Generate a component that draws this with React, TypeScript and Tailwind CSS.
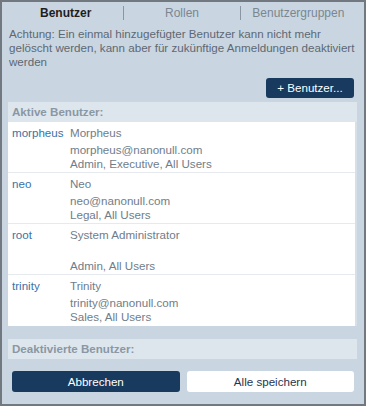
import React from "react";

const users = [
  { id: "morpheus", name: "Morpheus", email: "morpheus@nanonull.com", groups: "Admin, Executive, All Users" },
  { id: "neo", name: "Neo", email: "neo@nanonull.com", groups: "Legal, All Users" },
  { id: "root", name: "System Administrator", email: "", groups: "Admin, All Users" },
  { id: "trinity", name: "Trinity", email: "trinity@nanonull.com", groups: "Sales, All Users" },
];

export default function App() {
  return (
    <div className="w-[366px] h-[406px] box-border border-2 border-[#72787f] bg-[#c9d6e1] flex flex-col font-['Liberation_Sans',Arial,sans-serif] text-[11.6px] leading-[14px]">
      {/* Tabs */}
      <div className="flex items-center h-[22px] ml-[6px] mr-[8px] text-[12px]">
        <div className="flex-1 text-center font-bold text-[#1e1e1e]">Benutzer</div>
        <div className="w-px h-[14px] bg-[#8a96a2]" />
        <div className="flex-1 text-center text-[#7b8691]">Rollen</div>
        <div className="w-px h-[14px] bg-[#8a96a2]" />
        <div className="flex-1 text-center text-[#7b8691]">Benutzergruppen</div>
      </div>

      {/* Warning */}
      <div className="mt-[3px] pl-[7px] pr-[4px] text-[#5d6873]">
        Achtung: Ein einmal hinzugefügter Benutzer kann nicht mehr gelöscht werden, kann aber für zukünftige Anmeldungen deaktiviert werden
      </div>

      {/* Add button */}
      <div className="flex justify-end mt-[9px] pr-[10px]">
        <button className="w-[88px] h-[20px] rounded-[3px] bg-[#173a5e] text-white text-[11.6px] leading-[14px]">
          + Benutzer...
        </button>
      </div>

      {/* Active users panel */}
      <div className="mt-[4px] ml-[6px] mr-[7px] flex flex-col">
        <div className="h-[20px] flex items-center pl-[4px] bg-[#dee6ed] font-bold text-[#8a97a4]">Aktive Benutzer:</div>
        <div className="bg-white border-r-2 border-[#d6e0e8] flex flex-col">
          {users.map((u, i) => (
            <div
              key={u.id}
              className={`flex h-[51px] pt-[4px] pl-[4px] ${i < users.length - 1 ? "border-b border-[#e6eaee]" : ""}`}
            >
              <div className="w-[58px] text-[#3a72a6]">{u.id}</div>
              <div className="flex flex-col text-[#6f7d8a]">
                <div className="h-[14px]">{u.name}</div>
                <div className="h-[14px] mt-[3px]">{u.email}</div>
                <div className="h-[14px]">{u.groups}</div>
              </div>
            </div>
          ))}
        </div>
      </div>

      {/* Deactivated header */}
      <div className="mt-[13px] ml-[6px] mr-[7px] h-[20px] flex items-center pl-[4px] bg-[#dee6ed] font-bold text-[#8a97a4]">
        Deaktivierte Benutzer:
      </div>

      {/* Bottom buttons */}
      <div className="mt-[12px] flex gap-[7px] pl-[10px] pr-[10px]">
        <button className="flex-1 h-[21px] rounded-[3px] bg-[#173a5e] text-white text-[11.6px] leading-[14px]">
          Abbrechen
        </button>
        <button className="flex-1 h-[21px] rounded-[3px] bg-white text-[#1f3550] text-[11.6px] leading-[14px]">
          Alle speichern
        </button>
      </div>
    </div>
  );
}
